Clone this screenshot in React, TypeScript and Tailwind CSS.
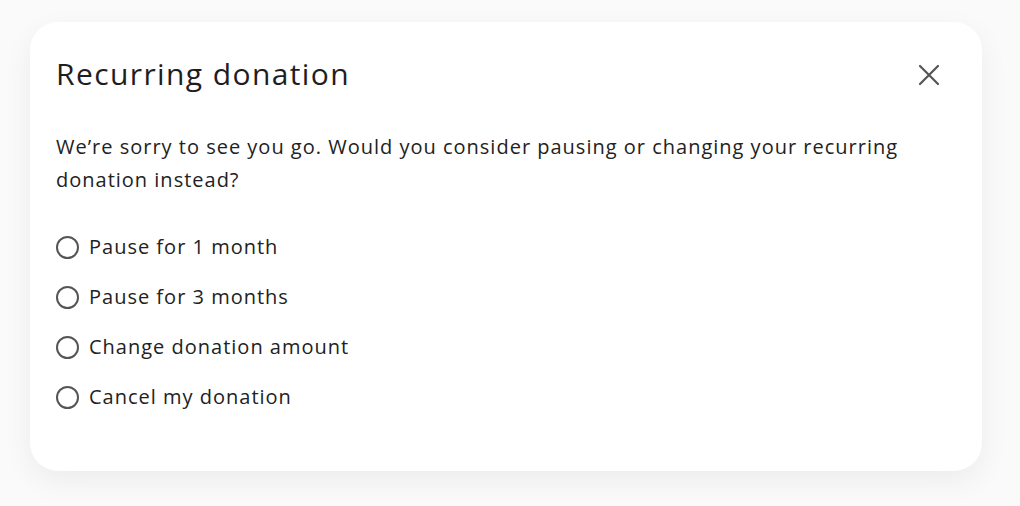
import React, { useState } from "react";

const options = [
  "Pause for 1 month",
  "Pause for 3 months",
  "Change donation amount",
  "Cancel my donation",
];

const App: React.FC = () => {
  const [selected, setSelected] = useState<number | null>(null);

  return (
    <div
      className="w-[1020px] h-[506px] bg-[#fafafa] pt-[22px] pl-[30px]"
      style={{ fontFamily: "'Open Sans', 'Noto Sans', sans-serif" }}
    >
      <div className="w-[952px] h-[449px] bg-white rounded-[28px] shadow-[0_10px_30px_rgba(0,0,0,0.06)] pl-[26px] pr-[42px] pt-[30px]">
        <div className="flex items-start justify-between">
          <h2 className="text-[30px] leading-[44px] tracking-[1.4px] text-[#1e1e1e]">Recurring donation</h2>
          <button className="mt-[12px] text-[#555]" aria-label="Close">
            <svg width="22" height="22" viewBox="0 0 22 22" fill="none" stroke="currentColor" strokeWidth="2.2" strokeLinecap="round">
              <path d="M2 2 L20 20 M20 2 L2 20" />
            </svg>
          </button>
        </div>

        <p className="mt-[34px] text-[20px] leading-[33px] tracking-[1px] text-[#222] max-w-[860px]">
          We’re sorry to see you go. Would you consider pausing or changing your recurring donation instead?
        </p>

        <div className="mt-[37px] flex flex-col gap-[22px]">
          {options.map((label, i) => (
            <label key={label} className="flex items-center gap-[10px] cursor-pointer h-[28px]">
              <span
                onClick={() => setSelected(i)}
                className="w-[23px] h-[23px] rounded-full border-2 border-[#555] flex items-center justify-center"
              >
                {selected === i && <span className="w-[11px] h-[11px] rounded-full bg-[#555]" />}
              </span>
              <span className="text-[20px] tracking-[1px] text-[#222]" onClick={() => setSelected(i)}>
                {label}
              </span>
            </label>
          ))}
        </div>
      </div>
    </div>
  );
};

export default App;
